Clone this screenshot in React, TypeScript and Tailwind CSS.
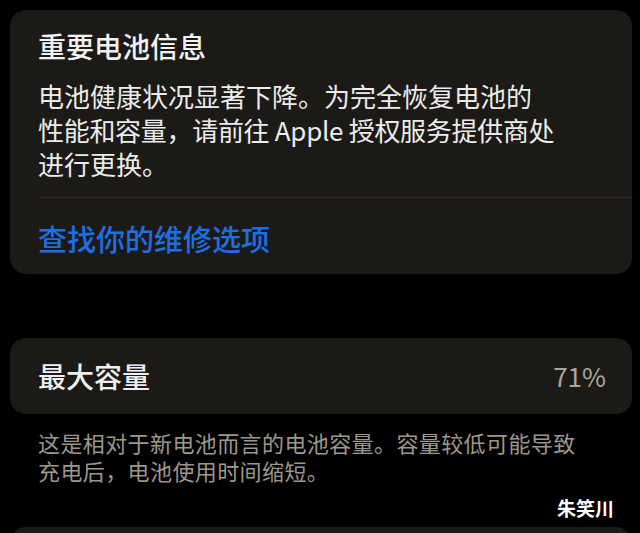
import React from "react";

const font = { fontFamily: '"Noto Sans CJK SC", "Noto Sans", sans-serif' };

export default function App() {
  return (
    <div
      className="w-[640px] h-[533px] overflow-hidden bg-black flex flex-col"
      style={font}
    >
      <div className="shrink-0 mt-[10px] mx-[10px] w-[622px] rounded-[16px] bg-[#1c1a17] pt-[18px] pb-[18px]">
        <div className="pl-[28px] text-[28px] leading-[36px] font-medium text-[#f2f2f2]">
          重要电池信息
        </div>
        <div className="pl-[28px] mt-[15px] text-[26px] leading-[34px] text-[#ececec]">
          <div>电池健康状况显著下降。为完全恢复电池的</div>
          <div className="tracking-[-0.3px]">性能和容量，请前往 Apple 授权服务提供商处</div>
          <div>进行更换。</div>
        </div>
        <div className="ml-[28px] mt-[16px] h-px bg-[#2e2b27]" />
        <div className="pl-[28px] mt-[22px] text-[29px] leading-[36px] font-medium text-[#1c6fe4]">
          查找你的维修选项
        </div>
      </div>

      <div className="shrink-0 mt-[64px] mx-[10px] w-[622px] h-[76px] rounded-[16px] bg-[#1c1a17] flex items-center justify-between pl-[28px] pr-[26px]">
        <span className="text-[28px] leading-[36px] font-medium text-[#f0f0f0]">
          最大容量
        </span>
        <span className="text-[26px] leading-[36px] text-[#aca79e]">71%</span>
      </div>

      <div className="shrink-0 mt-[14px] pl-[38px] text-[22px] leading-[28px] tracking-[0.4px] text-[#9d978c]">
        <div>这是相对于新电池而言的电池容量。容量较低可能导致</div>
        <div>充电后，电池使用时间缩短。</div>
      </div>

      <div className="shrink-0 mt-[12px] flex justify-end pr-[26px]">
        <span className="text-[19px] leading-[24px] font-bold text-white">朱笑川</span>
      </div>

      <div className="shrink-0 mt-[7px] mx-[10px] w-[622px] h-[60px] rounded-[16px] bg-[#1c1a17]" />
    </div>
  );
}
